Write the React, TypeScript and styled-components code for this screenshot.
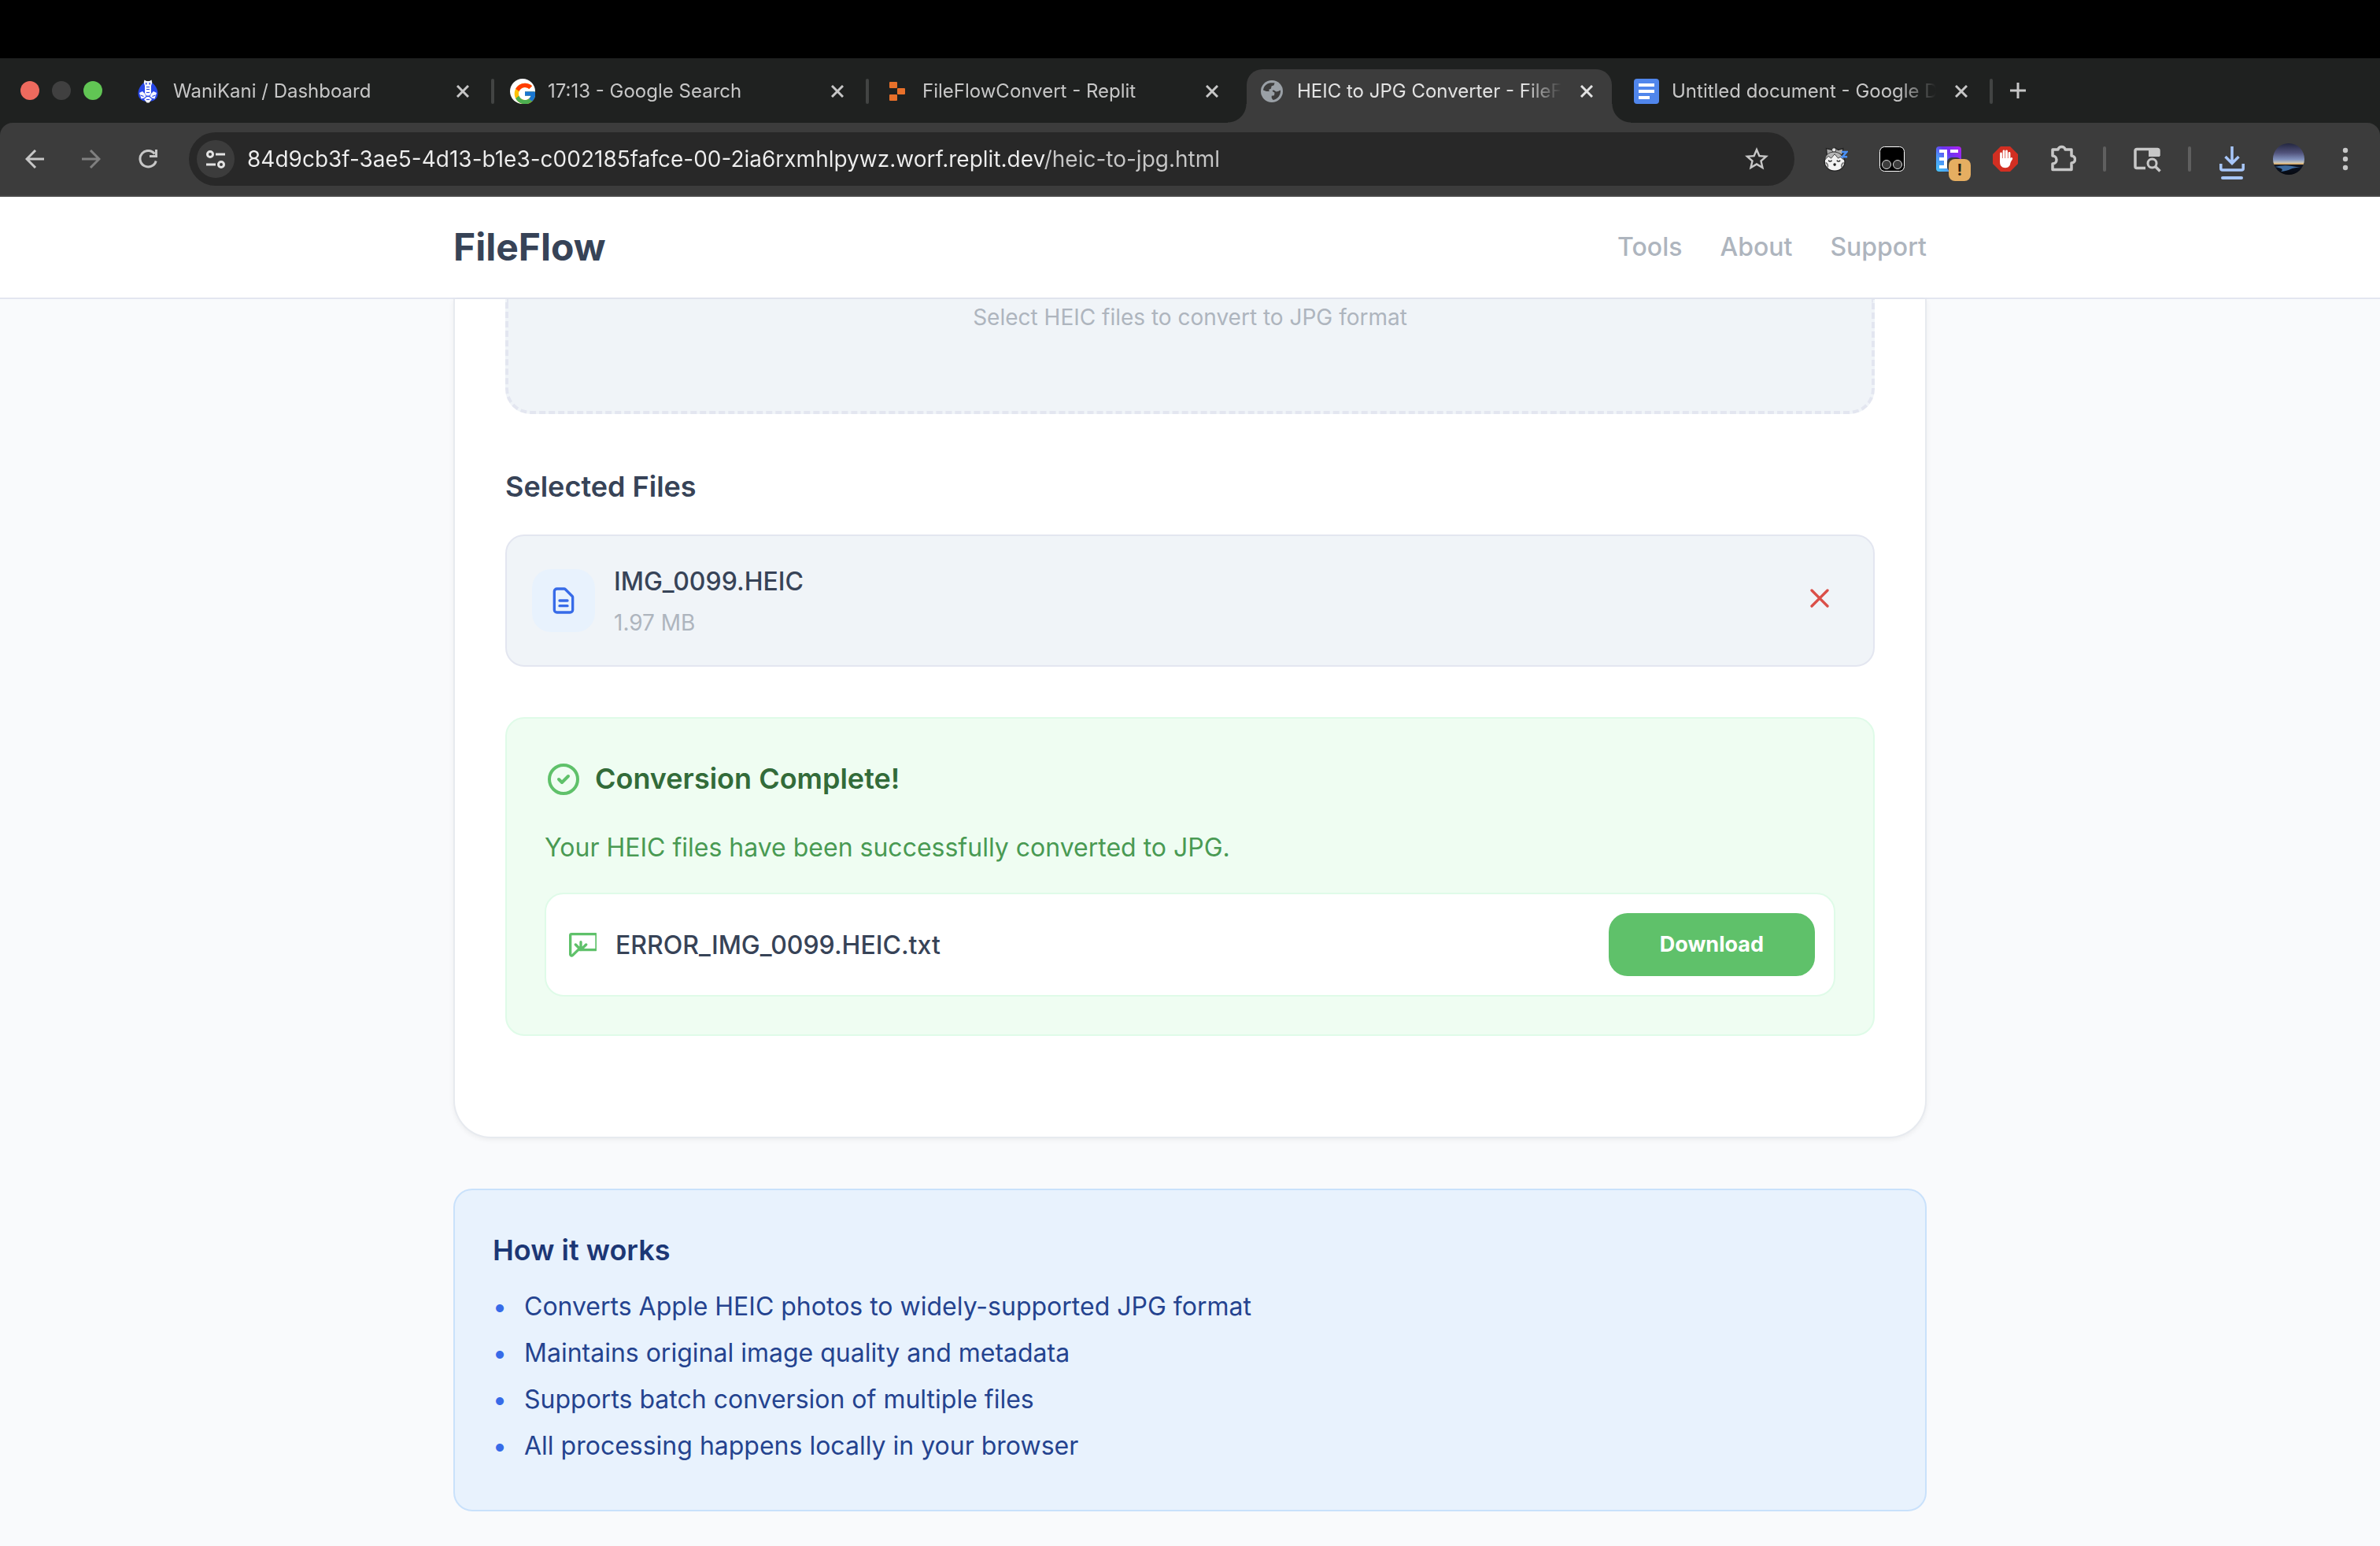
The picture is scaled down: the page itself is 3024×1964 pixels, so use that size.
import React from "react";
import styled, { createGlobalStyle, css } from "styled-components";
import { FcGoogle } from "react-icons/fc";
import { MdStarBorder } from "react-icons/md";

const color = {
  text: "#374357",
  muted: "#aeb5be",
  line: "#e3e6f0",
  surface: "#f0f4f8",
  page: "#f9fafc",
  blue: "#376be8",
  blueSoft: "#e8f2fd",
  green: "#5fc16a",
  greenLine: "#dffbe8",
  greenSoft: "#effdf2",
  strip: "#1f2120",
  toolbar: "#3c3c3c",
  chromeIcon: "#c7c7c7",
};

const GlobalStyle = createGlobalStyle`
  * { box-sizing: border-box; }
  html, body { margin: 0; height: 100%; }
  #root { height: 100%; }
  body {
    font-family: Inter, "Liberation Sans", sans-serif;
    font-size: 32px;
    line-height: 51px;
    color: ${color.text};
    background: ${color.page};
    overflow: hidden;
  }
  h1, h2, h3, p, ul { margin: 0; padding: 0; }
  button, input { font: inherit; }
  svg { display: block; flex: none; }
`;

const Screen = styled.div`
  display: flex;
  flex-direction: column;
  min-height: 100%;
`;

/* ---------- browser window ---------- */

const MenuGap = styled.div`
  height: 74px;
  background: #000;
`;

const TabStrip = styled.div`
  display: flex;
  height: 82px;
  background: ${color.strip};
`;

const WindowControls = styled.div`
  display: flex;
  gap: 16px;
  flex: none;
  width: 150px;
  padding: 29px 0 0 26px;
`;

const Light = styled.button<{ $fill: string }>`
  width: 24px;
  height: 24px;
  padding: 0;
  border: 0;
  border-radius: 50%;
  background: ${(p) => p.$fill};
`;

const TabCell = styled.div<{ $divider?: boolean }>`
  position: relative;
  flex: 0 1 476px;
  min-width: 0;
  padding: 14px 6px 0;
  ${(p) =>
    p.$divider &&
    css`
      &::after {
        content: "";
        position: absolute;
        right: -2px;
        top: 26px;
        width: 4px;
        height: 32px;
        border-radius: 2px;
        background: #424443;
      }
    `}
`;

const TabFace = styled.div<{ $active?: boolean }>`
  position: relative;
  display: flex;
  align-items: center;
  gap: 16px;
  height: 68px;
  padding: 0 16px 12px;
  border-radius: 20px 20px 0 0;
  color: ${(p) => (p.$active ? "#e3e3e3" : color.chromeIcon)};
  ${(p) =>
    p.$active &&
    css`
      background: ${color.toolbar};
      &::before,
      &::after {
        content: "";
        position: absolute;
        bottom: 0;
        width: 24px;
        height: 24px;
      }
      &::before {
        left: -24px;
        background: radial-gradient(circle at 0 0, transparent 23px, ${color.toolbar} 24px);
      }
      &::after {
        right: -24px;
        background: radial-gradient(circle at 100% 0, transparent 23px, ${color.toolbar} 24px);
      }
    `}
`;

const TabIcon = styled.span`
  display: flex;
  align-items: center;
  justify-content: center;
  flex: none;
  width: 32px;
  height: 32px;
`;

const TabTitle = styled.span`
  flex: 1;
  min-width: 0;
  overflow: hidden;
  white-space: nowrap;
  font-size: 24px;
  line-height: 32px;
  mask-image: linear-gradient(90deg, #000 calc(100% - 48px), transparent);
`;

const PlainButton = styled.button`
  display: flex;
  align-items: center;
  justify-content: center;
  flex: none;
  padding: 0;
  border: 0;
  background: none;
  color: inherit;
`;

const TabClose = styled(PlainButton)`
  width: 32px;
  height: 32px;
`;

const NewTab = styled(PlainButton)`
  width: 68px;
  height: 82px;
  color: ${color.chromeIcon};
`;

const ToolbarBack = styled.div`
  background: ${color.strip};
`;

const Toolbar = styled.div`
  display: flex;
  align-items: center;
  height: 94px;
  padding: 0 8px;
  border-bottom: 2px solid #474747;
  border-radius: 16px 16px 0 0;
  background: ${color.toolbar};
  color: ${color.chromeIcon};
`;

const ToolButton = styled(PlainButton)<{ $dim?: boolean }>`
  width: 72px;
  height: 72px;
  color: ${(p) => (p.$dim ? "#808080" : "inherit")};
`;

const ToolDivider = styled.span`
  flex: none;
  width: 4px;
  height: 32px;
  margin: 0 16px;
  border-radius: 2px;
  background: #5f5f5f;
`;

const AddressBar = styled.form`
  display: flex;
  align-items: center;
  gap: 16px;
  flex: 1;
  min-width: 0;
  height: 68px;
  margin: 0 16px;
  padding: 0 24px 0 10px;
  border-radius: 34px;
  background: #282828;
`;

const SiteChip = styled(PlainButton)`
  width: 48px;
  height: 48px;
  border-radius: 50%;
  background: ${color.toolbar};
`;

const AddressInput = styled.input`
  flex: 1;
  min-width: 0;
  padding: 0;
  border: 0;
  outline: 0;
  font-size: 28px;
  line-height: 40px;
  color: transparent;
  background: linear-gradient(90deg, #eeeeee 1014px, ${color.chromeIcon} 1014px);
  background-clip: text;
  -webkit-background-clip: text;
`;

const StarButton = styled(PlainButton)`
  width: 48px;
  height: 48px;
`;

const BadgeHost = styled.span`
  position: relative;
  display: block;
`;

const Badge = styled.span`
  position: absolute;
  left: 16px;
  top: 16px;
  width: 28px;
  height: 28px;
  border-radius: 8px;
  background: #e5ae61;
  color: #2a2112;
  font-size: 20px;
  font-weight: 700;
  line-height: 28px;
  text-align: center;
`;

/* ---------- web page ---------- */

const Page = styled.div`
  flex: 1;
  background: ${color.page};
`;

const SiteHeader = styled.header`
  background: #fff;
  border-bottom: 2px solid ${color.line};
`;

const Container = styled.div`
  width: 100%;
  max-width: 2000px;
  margin: 0 auto;
  padding: 0 64px;
`;

const HeaderRow = styled(Container)`
  display: flex;
  align-items: center;
  justify-content: space-between;
  height: 128px;
  padding-bottom: 2px;
`;

const Brand = styled.a`
  font-size: 48px;
  font-weight: 700;
  color: inherit;
  text-decoration: none;
`;

const Nav = styled.nav`
  display: flex;
  gap: 48px;
`;

const NavLink = styled.a`
  font-weight: 500;
  color: ${color.muted};
  text-decoration: none;
`;

const Card = styled.main`
  padding: 0 64px 128px;
  border: 2px solid #e7eaef;
  border-top: 0;
  border-radius: 0 0 48px 48px;
  background: #fff;
  box-shadow: 0 2px 6px rgba(0, 0, 0, 0.06);
`;

const DropZone = styled.label`
  display: block;
  padding-bottom: 95px;
  border: 4px dashed ${color.line};
  border-top: 0;
  border-radius: 0 0 32px 32px;
  background: ${color.surface};
  color: ${color.muted};
  font-size: 28px;
  line-height: 47px;
  text-align: center;
`;

const HiddenFile = styled.input`
  position: absolute;
  width: 1px;
  height: 1px;
  opacity: 0;
`;

const Heading = styled.h2<{ $tone?: string }>`
  padding-bottom: 2px;
  font-size: 36px;
  font-weight: 600;
  line-height: 56px;
  color: ${(p) => p.$tone ?? "inherit"};
`;

const FilesSection = styled.section`
  display: flex;
  flex-direction: column;
  gap: 31px;
  margin: 64px 0;
`;

const FileItem = styled.div`
  display: flex;
  align-items: center;
  gap: 24px;
  padding: 32px;
  border: 2px solid ${color.line};
  border-radius: 24px;
  background: ${color.surface};
`;

const FileIcon = styled.span`
  display: flex;
  align-items: center;
  justify-content: center;
  flex: none;
  width: 80px;
  height: 80px;
  border-radius: 24px;
  background: ${color.blueSoft};
  color: ${color.blue};
`;

const FileText = styled.div`
  display: flex;
  flex-direction: column;
  gap: 6px;
  flex: 1;
  min-width: 0;
`;

const FileName = styled.span`
  flex: 1;
  font-weight: 500;
`;

const FileSize = styled.span`
  font-size: 28px;
  line-height: 43px;
  color: ${color.muted};
`;

const RemoveButton = styled(PlainButton)`
  padding: 16px 16px 22px;
  color: #da4f48;
`;

const SuccessBox = styled.section`
  display: flex;
  flex-direction: column;
  gap: 32px;
  padding: 48px;
  border: 2px solid ${color.greenLine};
  border-radius: 24px;
  background: ${color.greenSoft};
  color: #499a53;
`;

const SuccessTitle = styled.div`
  display: flex;
  align-items: center;
  gap: 16px;
  color: ${color.green};
`;

const ResultItem = styled.div`
  display: flex;
  align-items: center;
  gap: 24px;
  padding: 24px;
  border: 2px solid ${color.greenLine};
  border-radius: 24px;
  background: #fff;
  color: ${color.green};
`;

const ResultName = styled(FileName)`
  color: ${color.text};
`;

const DownloadButton = styled.button`
  height: 80px;
  padding: 0 65px;
  border: 0;
  border-radius: 24px;
  background: ${color.green};
  color: #fff;
  font-size: 27px;
  font-weight: 700;
  line-height: 34px;
`;

const InfoBox = styled.section`
  margin-top: 64px;
  padding: 48px;
  border: 2px solid #c9e1fb;
  border-radius: 24px;
  background: #e8f2fd;
`;

const InfoList = styled.ul`
  margin-top: 16px;
  list-style: none;
`;

const InfoItem = styled.li`
  display: flex;
  margin-bottom: 8px;
  color: #24438f;
  &::before {
    content: "•";
    flex: none;
    width: 40px;
    color: ${color.blue};
  }
`;

/* ---------- drawings ---------- */

const Stroke = ({ size, d }: { size: number; d: string }) => (
  <svg
    width={size}
    height={size}
    viewBox="0 0 24 24"
    fill="none"
    stroke="currentColor"
    strokeWidth={2}
    strokeLinecap="round"
    strokeLinejoin="round"
    aria-hidden="true"
  >
    <path d={d} />
  </svg>
);

const Line = ({ size, d }: { size: number; d: string }) => (
  <svg
    width={size}
    height={size}
    viewBox={`0 0 ${size} ${size}`}
    fill="none"
    stroke="currentColor"
    strokeWidth={3}
    aria-hidden="true"
  >
    <path d={d} />
  </svg>
);

const CrocIcon = () => (
  <svg width="28" height="30" viewBox="0 0 28 30" aria-hidden="true">
    <path d="M14 2.500C20 2.500 26.500 10 26.500 17.500S21 28 14 28 1.500 25 1.500 17.500 8 2.500 14 2.500z" fill="#2747e8" />
    <path d="M9.500.5l2.500 1.500h4L18.500.5l.8 3.500-1.300 4v9.500l-2 3h-4l-2-3V8L8.700 4z" fill="#f4f6ff" />
    <path d="M3 17l4-2 3 3 1.500 3.500-2.500 2-3.500 1zM25 17l-4-2-3 3-1.500 3.500 2.500 2 3.500 1z" fill="#f4f6ff" />
    <path d="M9 25l3.500-3h3L19 25l-3.500 4.500h-3z" fill="#f4f6ff" />
    <path d="M11 4h1.500v2.500H11zM15.500 4H17v2.500h-1.500z" fill="#2747e8" />
    <path d="M12 9.500h4M12 12.500h4M12 16.500h4M12 25.500h4M4.500 20l4 1.500M23.500 20l-4 1.500" stroke="#2747e8" strokeWidth="1.200" />
  </svg>
);

const GoogleIcon = () => (
  <svg width="32" height="32" viewBox="0 0 32 32" aria-hidden="true">
    <circle cx="16" cy="16" r="16" fill="#fff" />
    <FcGoogle x="3" y="3" width="26" height="26" />
  </svg>
);

const ReplitIcon = () => (
  <svg width="20" height="24" viewBox="0 0 20 24" aria-hidden="true" fill="#e8702a">
    <rect x="0" y="0" width="10" height="8" rx="1" />
    <rect x="10" y="8" width="10" height="8" rx="1" />
    <rect x="0" y="16" width="10" height="8" rx="1" />
  </svg>
);

const GlobeIcon = () => (
  <svg width="28" height="28" viewBox="0 0 28 28" aria-hidden="true">
    <circle cx="14" cy="14" r="14" fill="#9aa0a6" />
    <path
      d="M3 12.500C3.600 7.500 7.500 4 12 3.200h5.500l-.8 3-3.200 1.300-.5 3-3 1.500 1 2H7z"
      fill="#3c3c3c"
    />
    <path
      d="M25 12.500c.6 6-3.500 11.500-9.500 12.500l-1.800-2.500v-2.700l3.300-.6.500-3.500-3-2 1.500-1.500 3.500 2.300 2.500-.5z"
      fill="#3c3c3c"
    />
  </svg>
);

const DocsIcon = () => (
  <svg width="32" height="32" viewBox="0 0 32 32" aria-hidden="true">
    <rect width="32" height="32" rx="4" fill="#5086ec" />
    <path d="M6 6h20v4H6zM6 14h20v4H6zM6 22h14v4H6z" fill="#fff" />
  </svg>
);

const SleepyIcon = () => (
  <svg width="32" height="32" viewBox="0 0 36 36" aria-hidden="true">
    <path d="M5 3l9 2 4-3 4 3 7-2-1 9H6z" fill="#a9a9a9" stroke="#222" strokeWidth="1.500" />
    <circle cx="16" cy="5" r="3" fill="#e6e6e6" stroke="#222" />
    <ellipse cx="17" cy="22" rx="14.500" ry="13" fill="#f3f3f3" stroke="#222" strokeWidth="1.500" />
    <path d="M3 19c1-7 6-11 13-11s12 4 14 11l-5-4-3 2-5-6-5 6-4-3z" fill="#b5b5b5" stroke="#333" />
    <path d="M8 20q2.500 3 5 0M20 20q2.500 3 5 0" stroke="#222" strokeWidth="1.500" fill="none" />
    <path d="M4 23q4 2 3 7M30 23q-4 2-3 7" stroke="#777" strokeWidth="2" fill="none" />
    <circle cx="17" cy="26" r="2" fill="#222" />
    <path d="M27 8h7l-6 7h7" stroke="#4a90f5" strokeWidth="2.800" fill="none" />
  </svg>
);

const EyesIcon = () => (
  <svg width="32" height="32" viewBox="0 0 32 32" aria-hidden="true" stroke="#fff">
    <rect x="0.500" y="0.500" width="31" height="31" rx="6" fill="#000" />
    <g fill="#3c3c3c" stroke="#ddd">
      <circle cx="9" cy="23" r="5.500" />
      <circle cx="23" cy="23" r="5.500" />
    </g>
  </svg>
);

const GridIcon = () => (
  <svg width="32" height="32" viewBox="0 0 32 32" aria-hidden="true">
    <defs>
      <linearGradient id="grid-fill" x1="0" y1="1" x2="1" y2="0">
        <stop offset="0" stopColor="#45c8fa" />
        <stop offset="0.350" stopColor="#4c92f7" />
        <stop offset="0.600" stopColor="#6a35f0" />
        <stop offset="1" stopColor="#b41ff2" />
      </linearGradient>
    </defs>
    <rect width="32" height="32" rx="4" fill="url(#grid-fill)" />
    <path d="M4 4h10v24H4v-4h6v-6H4v-4h6V8H4zM18 4h10v4H18z" fill="#fff" />
    <rect x="14" y="14" width="18" height="18" rx="6" fill="#3c3c3c" />
  </svg>
);

const BlockIcon = () => (
  <svg width="32" height="32" viewBox="0 0 32 32" aria-hidden="true">
    <path d="M10 0h12l10 10v12L22 32H10L0 22V10z" fill="#d22f22" />
    <path
      d="M10.500 9v10M14 6v12M17.500 6v12M21 8.500V19M23.800 15.500L20.500 21"
      stroke="#fff"
      strokeWidth="2.800"
      strokeLinecap="round"
    />
    <path d="M9.100 15h13.300v5.500c0 4-2.500 6.700-6.500 6.700s-6.800-2.700-6.800-6.700z" fill="#fff" />
  </svg>
);

const PuzzleIcon = () => (
  <svg width="36" height="36" viewBox="0 0 36 36" fill="none" stroke="currentColor" strokeWidth="3.500" strokeLinejoin="round" aria-hidden="true">
    <path d="M6 6h7a4.500 3.500 0 0 1 9 0h8v8a4.500 4.500 0 0 1 0 9v8.500H6v-7.500a5 5 0 0 0 0-10z" />
  </svg>
);

const SearchTabIcon = () => (
  <svg width="36" height="36" viewBox="0 0 36 36" fill="none" stroke="currentColor" aria-hidden="true">
    <path d="M16 29.500H5a2 2 0 0 1-2-2v-20a2 2 0 0 1 2-2h26a2 2 0 0 1 2 2V14" strokeWidth="3.500" />
    <path d="M20 6h14v9H20z" fill="currentColor" stroke="none" />
    <circle cx="24.500" cy="23.500" r="5.500" strokeWidth="3" />
    <path d="M28.500 27.500l6 6" strokeWidth="3.500" />
  </svg>
);

const DownloadsIcon = () => (
  <svg width="32" height="56" viewBox="0 0 32 56" fill="none" stroke="#a8c7fa" aria-hidden="true">
    <path d="M16 12v21M7.500 25l8.500 8.500 8.500-8.500" strokeWidth="3.500" />
    <path d="M1.800 34v6a2 2 0 0 0 2 2h24.400a2 2 0 0 0 2-2v-6" strokeWidth="3.500" />
    <path d="M4 52h24" strokeWidth="4" strokeLinecap="round" />
  </svg>
);

const AvatarIcon = () => (
  <svg width="40" height="40" viewBox="0 0 40 40" aria-hidden="true">
    <defs>
      <linearGradient id="dusk" x1="0" y1="0" x2="0" y2="1">
        <stop offset="0" stopColor="#23263f" />
        <stop offset="0.300" stopColor="#50527a" />
        <stop offset="0.520" stopColor="#8394c0" />
        <stop offset="0.620" stopColor="#c9c6b8" />
        <stop offset="0.660" stopColor="#e8b264" />
        <stop offset="0.690" stopColor="#0d1526" />
        <stop offset="1" stopColor="#05080f" />
      </linearGradient>
      <clipPath id="avatar-clip">
        <circle cx="20" cy="20" r="20" />
      </clipPath>
    </defs>
    <g clipPath="url(#avatar-clip)">
      <rect width="40" height="40" fill="url(#dusk)" />
      <path d="M2 30q12-3 22-1t14 1q-12 1-16 3t-12 3q6-4-8-6z" fill="#3e6b9e" />
    </g>
  </svg>
);

const DotsIcon = () => (
  <svg width="8" height="32" viewBox="0 0 8 32" fill="currentColor" aria-hidden="true">
    <circle cx="4" cy="5" r="3.200" />
    <circle cx="4" cy="16" r="3.200" />
    <circle cx="4" cy="27" r="3.200" />
  </svg>
);

const TuneIcon = () => (
  <svg width="28" height="28" viewBox="0 0 28 28" fill="none" stroke="#e3e3e3" strokeWidth="3" aria-hidden="true">
    <circle cx="7" cy="8" r="3.500" />
    <path d="M14 8h12M2 21h12" />
    <circle cx="21" cy="21" r="3.500" />
  </svg>
);

/* ---------- data ---------- */

const tabs = [
  { title: "WaniKani / Dashboard", icon: <CrocIcon />, divider: true },
  { title: "17:13 - Google Search", icon: <GoogleIcon />, divider: true },
  { title: "FileFlowConvert - Replit", icon: <ReplitIcon /> },
  { title: "HEIC to JPG Converter - FileFlow", icon: <GlobeIcon />, active: true },
  { title: "Untitled document - Google Docs", icon: <DocsIcon />, divider: true },
];

const steps = [
  "Converts Apple HEIC photos to widely-supported JPG format",
  "Maintains original image quality and metadata",
  "Supports batch conversion of multiple files",
  "All processing happens locally in your browser",
];

const Browser = () => (
  <>
    <MenuGap />
    <TabStrip>
      <WindowControls>
        <Light $fill="#ed6a5e" aria-label="Close window" />
        <Light $fill="#404040" aria-label="Minimize window" />
        <Light $fill="#61c554" aria-label="Zoom window" />
      </WindowControls>
      {tabs.map((tab) => (
        <TabCell key={tab.title} $divider={tab.divider}>
          <TabFace $active={tab.active}>
            <TabIcon>{tab.icon}</TabIcon>
            <TabTitle>{tab.title}</TabTitle>
            <TabClose aria-label={`Close ${tab.title}`}>
              <Line size={16} d="M1 1l14 14M15 1L1 15" />
            </TabClose>
          </TabFace>
        </TabCell>
      ))}
      <NewTab aria-label="New tab">
        <Line size={20} d="M10 0v20M0 10h20" />
      </NewTab>
    </TabStrip>
    <ToolbarBack>
      <Toolbar>
        <ToolButton aria-label="Back">
          <Line size={24} d="M24 12H3M13 1L2 12l11 11" />
        </ToolButton>
        <ToolButton aria-label="Forward" $dim>
          <Line size={24} d="M0 12h21M11 1l11 11-11 11" />
        </ToolButton>
        <ToolButton aria-label="Reload">
          <Line size={24} d="M20.500 5.500A10.300 10.300 0 1 0 22.200 14.500M22.500 0v8.500H14" />
        </ToolButton>
        <AddressBar onSubmit={(e) => e.preventDefault()}>
          <SiteChip type="button" aria-label="Site information">
            <TuneIcon />
          </SiteChip>
          <AddressInput
            aria-label="Address"
            defaultValue="84d9cb3f-3ae5-4d13-b1e3-c002185fafce-00-2ia6rxmhlpywz.worf.replit.dev/heic-to-jpg.html"
          />
          <StarButton type="button" aria-label="Bookmark">
            <MdStarBorder size={36} />
          </StarButton>
        </AddressBar>
        <ToolButton aria-label="Sleepy extension">
          <SleepyIcon />
        </ToolButton>
        <ToolButton aria-label="Script extension">
          <EyesIcon />
        </ToolButton>
        <ToolButton aria-label="Reader extension">
          <BadgeHost>
            <GridIcon />
            <Badge>!</Badge>
          </BadgeHost>
        </ToolButton>
        <ToolButton aria-label="Content blocker">
          <BlockIcon />
        </ToolButton>
        <ToolButton aria-label="Extensions">
          <PuzzleIcon />
        </ToolButton>
        <ToolDivider />
        <ToolButton aria-label="Search tabs">
          <SearchTabIcon />
        </ToolButton>
        <ToolDivider />
        <ToolButton aria-label="Downloads">
          <DownloadsIcon />
        </ToolButton>
        <ToolButton aria-label="Profile">
          <AvatarIcon />
        </ToolButton>
        <ToolButton aria-label="Menu">
          <DotsIcon />
        </ToolButton>
      </Toolbar>
    </ToolbarBack>
  </>
);

export default function App() {
  return (
    <Screen>
      <GlobalStyle />
      <Browser />
      <Page>
        <SiteHeader>
          <HeaderRow>
            <Brand href="#">FileFlow</Brand>
            <Nav>
              <NavLink href="#tools">Tools</NavLink>
              <NavLink href="#about">About</NavLink>
              <NavLink href="#support">Support</NavLink>
            </Nav>
          </HeaderRow>
        </SiteHeader>
        <Container>
          <Card>
            <DropZone>
              Select HEIC files to convert to JPG format
              <HiddenFile type="file" accept=".heic" multiple />
            </DropZone>
            <FilesSection>
              <Heading>Selected Files</Heading>
              <FileItem>
                <FileIcon>
                  <Stroke
                    size={40}
                    d="M9 12h6m-6 4h6m2 5H7a2 2 0 01-2-2V5a2 2 0 012-2h5.586a1 1 0 01.707.293l5.414 5.414a1 1 0 01.293.707V19a2 2 0 01-2 2z"
                  />
                </FileIcon>
                <FileText>
                  <FileName>IMG_0099.HEIC</FileName>
                  <FileSize>1.97 MB</FileSize>
                </FileText>
                <RemoveButton aria-label="Remove IMG_0099.HEIC">
                  <Stroke size={40} d="M6 18L18 6M6 6l12 12" />
                </RemoveButton>
              </FileItem>
            </FilesSection>
            <SuccessBox>
              <SuccessTitle>
                <Stroke size={48} d="M9 12l2 2 4-4m6 2a9 9 0 11-18 0 9 9 0 0118 0z" />
                <Heading $tone="#326b39">Conversion Complete!</Heading>
              </SuccessTitle>
              <p>Your HEIC files have been successfully converted to JPG.</p>
              <ResultItem>
                <Stroke
                  size={40}
                  d="M12 10v6m0 0l-4-4m4 4l4-4M12 16h11a1 1 0 0 0 1-1V5a1 1 0 0 0-1-1H5a1 1 0 0 0-1 1v14.500a1 1 0 0 0 1.700 .7L10 16h2"
                />
                <ResultName>ERROR_IMG_0099.HEIC.txt</ResultName>
                <DownloadButton>Download</DownloadButton>
              </ResultItem>
            </SuccessBox>
          </Card>
          <InfoBox>
            <Heading $tone="#1c3775">How it works</Heading>
            <InfoList>
              {steps.map((step) => (
                <InfoItem key={step}>{step}</InfoItem>
              ))}
            </InfoList>
          </InfoBox>
        </Container>
      </Page>
    </Screen>
  );
}
